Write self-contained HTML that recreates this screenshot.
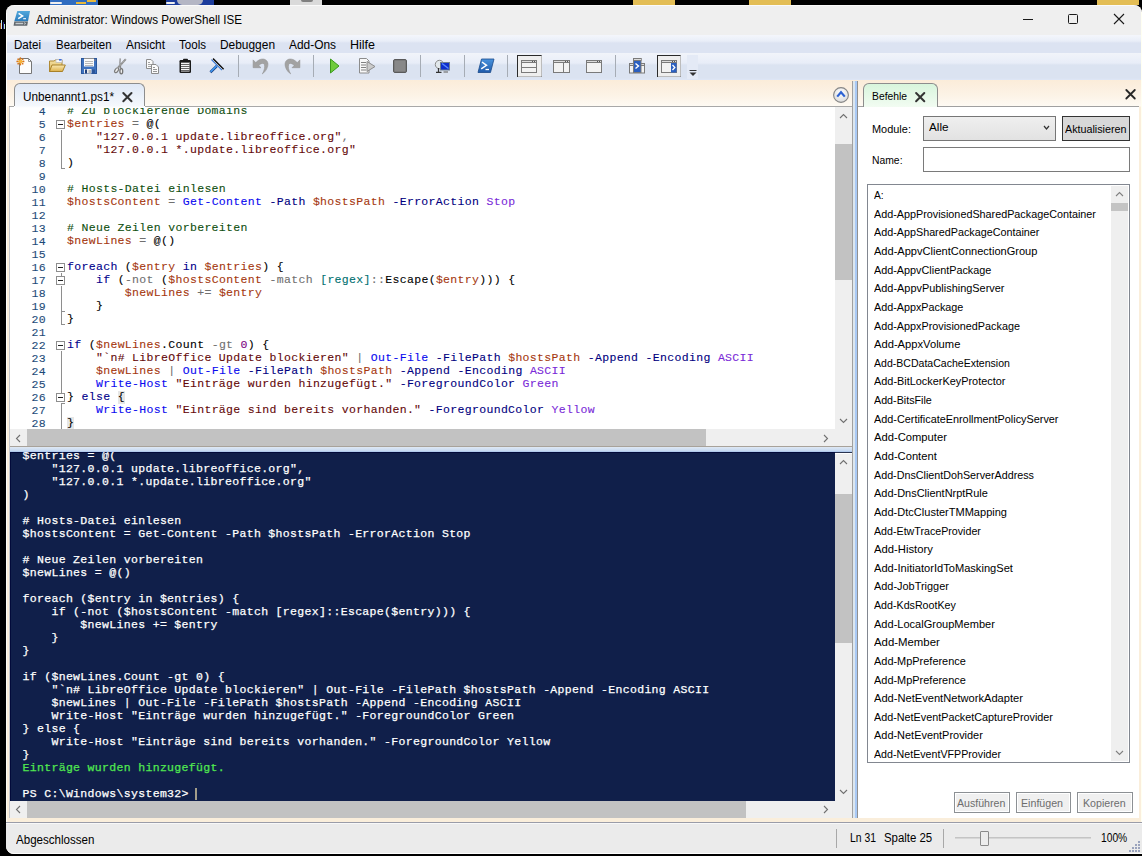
<!DOCTYPE html><html><head><meta charset="utf-8"><style>
html,body{margin:0;padding:0;background:#000;width:1142px;height:856px;overflow:hidden;position:relative;}
div{box-sizing:border-box;}
</style></head><body>
<div style="position:absolute;left:50px;top:0px;width:48px;height:5px;background:#2f6cc0;"></div>
<div style="position:absolute;left:50px;top:1.5px;width:12px;height:2.5px;background:#eeeeee;border-radius:1px;"></div>
<div style="position:absolute;left:76px;top:2px;width:10px;height:2px;background:#e8b83a;"></div>
<div style="position:absolute;left:87px;top:0px;width:9px;height:1.5px;background:#e8b83a;"></div>
<div style="position:absolute;left:166px;top:0px;width:48px;height:5px;background:#1c3c9c;"></div>
<div style="position:absolute;left:166px;top:1.5px;width:9px;height:2.5px;background:#eeeeee;border-radius:1px;"></div>
<div style="position:absolute;left:177px;top:0px;width:26px;height:5px;background:#b4b6c4;border-radius:0 0 13px 13px;"></div>
<div style="position:absolute;left:290px;top:0px;width:32px;height:5px;background:#dadada;"></div>
<div style="position:absolute;left:301px;top:0px;width:12px;height:1.5px;background:#808080;border-radius:0 0 6px 6px;"></div>
<div style="position:absolute;left:633px;top:0px;width:42px;height:5px;background:#e3bd55;"></div>
<div style="position:absolute;left:749px;top:0px;width:42px;height:5px;background:#e3bd55;"></div>
<div style="position:absolute;left:1097px;top:0px;width:42px;height:5px;background:#e3bd55;"></div>
<div style="position:absolute;left:1px;top:20px;width:1px;height:9px;background:#c8e8f0;"></div>
<div style="position:absolute;left:0px;top:23px;width:1px;height:6px;background:#a04a10;"></div>
<div style="position:absolute;left:3px;top:22px;width:1px;height:7px;background:#20208a;"></div>
<div style="position:absolute;left:4px;top:24px;width:1px;height:5px;background:#c0e8c0;"></div>
<div style="position:absolute;left:6px;top:5px;width:1136px;height:849px;background:#fdf6ec;border-radius:8px 8px 0 8px;overflow:hidden;"></div>
<div style="position:absolute;left:6px;top:5px;width:1136px;height:30px;background:#efefef;border-radius:8px 8px 0 0;"></div>
<div style="position:absolute;left:14px;top:5px;width:1120px;height:1px;background:#fafafa;"></div>
<div style="position:absolute;left:35.7px;top:7.84px;font-family:'Liberation Sans', sans-serif;font-size:12px;line-height:24px;color:#000;white-space:pre;transform:scaleX(0.9684);transform-origin:0 0;">Administrator: Windows PowerShell ISE</div>
<svg style="position:absolute;left:0px;top:0px;overflow:visible" width="40" height="30" viewBox="0 0 40 30">
<defs><linearGradient id="psg" x1="0" y1="0" x2="0" y2="1"><stop offset="0" stop-color="#52a8dc"/><stop offset="1" stop-color="#2a7cbd"/></linearGradient></defs>
<path d="M17.3 11 H30 L28 21.2 H14.3 Z" fill="url(#psg)"/>
<path d="M18.6 13.3 L22.6 15.9 L18.2 18.6" stroke="#fff" stroke-width="1.5" fill="none" stroke-linejoin="miter"/>
<path d="M23.2 18.7 H26" stroke="#fff" stroke-width="1.1"/>
<path d="M14.3 21.4 H28 L27.2 25.8 H13.6 Z" fill="#5f666b"/>
<path d="M15.6 22.8 H23.2 V24.3 H15.4 Z" fill="#c5cbcf"/>
<path d="M24 22.6 L25.8 23.5 L24 24.4" stroke="#c5cbcf" stroke-width="0.9" fill="none"/>
</svg>
<div style="position:absolute;left:1023px;top:19px;width:10px;height:1px;background:#1a1a1a;"></div>
<div style="position:absolute;left:1068px;top:14px;width:10px;height:10px;border:1px solid #1a1a1a;border-radius:1.5px;"></div>
<svg style="position:absolute;left:1113px;top:13px;overflow:visible" width="12" height="12" viewBox="0 0 12 12"><path d="M1 1 L11 11 M11 1 L1 11" stroke="#1a1a1a" stroke-width="1.1"/></svg>
<div style="position:absolute;left:6px;top:35px;width:1136px;height:18px;background:linear-gradient(#f4f6fb 0px,#e9eef8 6px,#dce3f2 8px,#dce3f2 18px);"></div>
<div style="position:absolute;left:14px;top:32.84px;font-family:'Liberation Sans', sans-serif;font-size:12px;line-height:24px;color:#000;white-space:pre;transform:scaleX(0.9637);transform-origin:0 0;">Datei</div>
<div style="position:absolute;left:55.7px;top:32.84px;font-family:'Liberation Sans', sans-serif;font-size:12px;line-height:24px;color:#000;white-space:pre;transform:scaleX(0.9564);transform-origin:0 0;">Bearbeiten</div>
<div style="position:absolute;left:125.7px;top:32.84px;font-family:'Liberation Sans', sans-serif;font-size:12px;line-height:24px;color:#000;white-space:pre;transform:scaleX(0.9913);transform-origin:0 0;">Ansicht</div>
<div style="position:absolute;left:178.6px;top:32.84px;font-family:'Liberation Sans', sans-serif;font-size:12px;line-height:24px;color:#000;white-space:pre;transform:scaleX(0.9637);transform-origin:0 0;">Tools</div>
<div style="position:absolute;left:220px;top:32.84px;font-family:'Liberation Sans', sans-serif;font-size:12px;line-height:24px;color:#000;white-space:pre;transform:scaleX(0.9932);transform-origin:0 0;">Debuggen</div>
<div style="position:absolute;left:289px;top:32.84px;font-family:'Liberation Sans', sans-serif;font-size:12px;line-height:24px;color:#000;white-space:pre;transform:scaleX(0.9927);transform-origin:0 0;">Add-Ons</div>
<div style="position:absolute;left:350px;top:32.84px;font-family:'Liberation Sans', sans-serif;font-size:12px;line-height:24px;color:#000;white-space:pre;transform:scaleX(1.041);transform-origin:0 0;">Hilfe</div>
<div style="position:absolute;left:6px;top:53px;width:1136px;height:27px;background:linear-gradient(#f1f4fa 0px,#e8edf8 10px,#dbe3f1 12px,#dbe3f1 25px,#dfe7f6 27px);"></div>
<svg style="position:absolute;left:0;top:0" width="720" height="80" viewBox="0 0 720 80"><rect x="238" y="55" width="1" height="22" fill="#a6acb5"/><rect x="313" y="55" width="1" height="22" fill="#a6acb5"/><rect x="420" y="55" width="1" height="22" fill="#a6acb5"/><rect x="464" y="55" width="1" height="22" fill="#a6acb5"/><rect x="507" y="55" width="1" height="22" fill="#a6acb5"/><rect x="615" y="55" width="1" height="22" fill="#a6acb5"/><path d="M19.5 58.5 H28.5 L31.5 61.5 V73.5 H19.5 Z" fill="#fdfdfd" stroke="#767676" stroke-width="1"/>
<path d="M28.5 58.5 V61.5 H31.5" fill="none" stroke="#8a8a8a" stroke-width="0.9"/>
<path d="M20.4 61.4 L23.40 61.40" stroke="#f2a42a" stroke-width="1.1"/><path d="M20.4 61.4 L22.52 63.52" stroke="#f2a42a" stroke-width="1.1"/><path d="M20.4 61.4 L20.40 64.40" stroke="#f2a42a" stroke-width="1.1"/><path d="M20.4 61.4 L18.28 63.52" stroke="#f2a42a" stroke-width="1.1"/><path d="M20.4 61.4 L17.40 61.40" stroke="#f2a42a" stroke-width="1.1"/><path d="M20.4 61.4 L18.28 59.28" stroke="#f2a42a" stroke-width="1.1"/><path d="M20.4 61.4 L20.40 58.40" stroke="#f2a42a" stroke-width="1.1"/><path d="M20.4 61.4 L22.52 59.28" stroke="#f2a42a" stroke-width="1.1"/><circle cx="23.60" cy="61.40" r="0.85" fill="#d8741a"/><circle cx="22.66" cy="63.66" r="0.85" fill="#d8741a"/><circle cx="20.40" cy="64.60" r="0.85" fill="#d8741a"/><circle cx="18.14" cy="63.66" r="0.85" fill="#d8741a"/><circle cx="17.20" cy="61.40" r="0.85" fill="#d8741a"/><circle cx="18.14" cy="59.14" r="0.85" fill="#d8741a"/><circle cx="20.40" cy="58.20" r="0.85" fill="#d8741a"/><circle cx="22.66" cy="59.14" r="0.85" fill="#d8741a"/>
<circle cx="20.4" cy="61.4" r="1.6" fill="#f7b43a"/><defs><linearGradient id="fg1" x1="0" y1="0" x2="0" y2="1"><stop offset="0" stop-color="#f6e3a6"/><stop offset="1" stop-color="#d9b254"/></linearGradient>
<linearGradient id="fg2" x1="0" y1="0" x2="0" y2="1"><stop offset="0" stop-color="#fbeab5"/><stop offset="1" stop-color="#dcb04a"/></linearGradient></defs>
<path d="M49.5 61 H54 L55.5 60 H62 V71.5 H49.5 Z" fill="url(#fg1)" stroke="#b08a35" stroke-width="1"/>
<rect x="56" y="59.5" width="6" height="3" fill="#f8f8f8" stroke="#b0b0b0" stroke-width="0.6"/>
<rect x="59" y="59" width="2.5" height="1.6" fill="#3d6fe0"/>
<path d="M49.5 71.5 L52 65 H65.3 L62.5 71.5 Z" fill="url(#fg2)" stroke="#a88128" stroke-width="1"/><rect x="81.5" y="58.5" width="15" height="15" fill="#3e72bf" stroke="#2a579c" stroke-width="1"/>
<rect x="84" y="58" width="10" height="8.5" fill="#fafafa"/>
<path d="M84 58.5 H94" stroke="#909090" stroke-width="1"/>
<path d="M85 61.5 H93 M85 63.5 H93 M85 65.5 H93" stroke="#a8a8a8" stroke-width="0.8"/>
<rect x="84" y="69" width="7.5" height="4.5" fill="#ececec"/>
<rect x="85" y="69.5" width="2" height="4" fill="#1f3f7a"/>
<rect x="88.5" y="70" width="2.5" height="3.5" fill="#b8b8b8"/>
<rect x="92" y="69.5" width="3" height="4" fill="#2c5598"/>
<rect x="94.5" y="59.5" width="1" height="1" fill="#d08040"/><path d="M120.2 58.3 Q119.3 63 120.8 68.5" stroke="#858585" stroke-width="1.2" fill="none"/>
<path d="M125.8 59.2 L118.2 67.5" stroke="#8a8a8a" stroke-width="1.9"/>
<path d="M125.5 59.6 L118.5 67.2" stroke="#f4f4f4" stroke-width="0.6" stroke-dasharray="0.9 1.1"/>
<ellipse cx="116.6" cy="70.2" rx="1.5" ry="2.7" transform="rotate(35 116.6 70.2)" fill="#f0f0f0" stroke="#7c7c7c" stroke-width="1.2"/>
<ellipse cx="121.3" cy="71.2" rx="1.4" ry="2.6" fill="#f0f0f0" stroke="#747474" stroke-width="1.3"/><path d="M146.5 59.5 H151 L153 61.5 V68.5 H146.5 Z" fill="#fbfbfb" stroke="#8c8c8c"/>
<path d="M148 62.5 H150 M148 64.5 H152 M148 66.5 H152" stroke="#9a9a9a" stroke-width="0.9"/>
<path d="M151.5 64.5 H156 L158.5 67 V73.5 H151.5 Z" fill="#fbfbfb" stroke="#8c8c8c"/>
<path d="M153 67.5 H155 M153 69.5 H157 M153 71.5 H157" stroke="#8a8a8a" stroke-width="0.9"/><rect x="179.5" y="60" width="11.5" height="13" rx="1.2" fill="#1a1a1a"/>
<rect x="183" y="58.8" width="5" height="2.5" rx="0.8" fill="#1a1a1a"/>
<rect x="181" y="62" width="8.5" height="9.5" fill="#f6f6f6"/>
<path d="M181 62.5 H189.5 M181 64.5 H189.5 M181 66.5 H189.5 M181 68.5 H189.5 M181 70.5 H189.5" stroke="#2a2a2a" stroke-width="0.7"/><path d="M211.5 59.5 L222 70" stroke="#3a7ad8" stroke-width="1.2"/>
<path d="M212.2 59.2 L222.6 69.6" stroke="#ffffff" stroke-width="0.9"/>
<path d="M213 58.6 L223.6 69.2" stroke="#111" stroke-width="1.5"/>
<path d="M216.8 66 L210.4 72.2" stroke="#1a3a78" stroke-width="2.6"/>
<path d="M216.6 65.9 L210.5 71.9" stroke="#3d96f0" stroke-width="1.6"/><path d="M253.1 59.9 L253.1 67.7 L261 67.7 L258.8 65.5 C260.5 63.6 263.2 62.6 264.2 64.2 C265.2 66.3 264.5 70.5 262.3 73.9 C266.3 71.2 268.3 66.8 267.9 63.2 C267.3 58.7 260.8 56.8 255.8 62.6 Z" fill="#a2a2a2" stroke="#8e8e8e" stroke-width="0.5"/><g transform="translate(553,0) scale(-1,1)"><path d="M253.1 59.9 L253.1 67.7 L261 67.7 L258.8 65.5 C260.5 63.6 263.2 62.6 264.2 64.2 C265.2 66.3 264.5 70.5 262.3 73.9 C266.3 71.2 268.3 66.8 267.9 63.2 C267.3 58.7 260.8 56.8 255.8 62.6 Z" fill="#a2a2a2" stroke="#8e8e8e" stroke-width="0.5"/></g><path d="M330.5 59 L339 66 L330.5 73 Z" fill="#6fcb3c" stroke="#3b9b1c" stroke-width="1"/><path d="M359.5 58.5 H366.5 L369 61 V73 H359.5 Z" fill="#f8f8f8" stroke="#8c8c8c"/>
<path d="M361 62.5 H366 M361 65 H366 M361 67.5 H366 M361 70 H366" stroke="#808080" stroke-width="1"/>
<path d="M367 61.5 L375 66.5 L367 71.5 Z" fill="#cacaca" stroke="#8c8c8c"/><rect x="393.5" y="59.5" width="13" height="13" rx="1.5" fill="#7b7b7b" stroke="#5a5a5a"/>
<rect x="395" y="61" width="10" height="10" fill="#888"/><circle cx="439.5" cy="64.5" r="4.2" fill="#e2e8ec" stroke="#8a8a8a"/>
<path d="M438.5 68 V72 M436 72.3 H441.5" stroke="#333" stroke-width="1.2"/>
<rect x="440.5" y="62.5" width="9" height="7.5" fill="#0d2ecc" stroke="#708090"/>
<path d="M442 63.5 L448.5 68.5" stroke="#5a8cff" stroke-width="1.3"/>
<path d="M443.5 72 H448" stroke="#7a7a7a" stroke-width="1.3"/><defs><linearGradient id="psg2" x1="0" y1="0" x2="0" y2="1"><stop offset="0" stop-color="#4a94de"/><stop offset="1" stop-color="#1f5aaa"/></linearGradient></defs>
<path d="M481.5 59 H494 L490.5 72.5 H478 Z" fill="url(#psg2)" stroke="#1a4a8a" stroke-width="0.8"/>
<path d="M482 62 L486.5 65.3 L481.2 68.8" stroke="#fff" stroke-width="1.5" fill="none"/>
<path d="M485.5 69.5 H489" stroke="#fff" stroke-width="1.3"/><rect x="517.5" y="55.5" width="24" height="21" fill="#eeeeee" stroke="#2a2a2a"/><path d="M518 76.5 H541.5 V55.5" stroke="#bcbcbc" fill="none"/><rect x="521.5" y="60.5" width="15" height="12" fill="#f2f2f2" stroke="#7a7a7a"/><rect x="521.5" y="60.5" width="15" height="2" fill="#dcdcdc" stroke="#7a7a7a"/><rect x="532" y="61" width="1" height="1" fill="#555"/><rect x="534" y="61" width="1" height="1" fill="#555"/><path d="M521 67.5 H537" stroke="#7a7a7a"/><rect x="553.5" y="60.5" width="16" height="12" fill="#f2f2f2" stroke="#7a7a7a"/><rect x="553.5" y="60.5" width="16" height="2" fill="#dcdcdc" stroke="#7a7a7a"/><rect x="565" y="61" width="1" height="1" fill="#555"/><rect x="567" y="61" width="1" height="1" fill="#555"/><path d="M563.5 62 V73" stroke="#7a7a7a"/><rect x="586.5" y="60.5" width="15" height="12" fill="#f2f2f2" stroke="#7a7a7a"/><rect x="586.5" y="60.5" width="15" height="2" fill="#dcdcdc" stroke="#7a7a7a"/><rect x="597" y="61" width="1" height="1" fill="#555"/><rect x="599" y="61" width="1" height="1" fill="#555"/><rect x="629.5" y="63.5" width="15" height="9.5" fill="#f2f2f2" stroke="#7a7a7a"/>
<rect x="629.5" y="63.5" width="15" height="2" fill="#dcdcdc" stroke="#7a7a7a"/>
<rect x="633.5" y="58.5" width="7.5" height="14" fill="#2a5fc0" stroke="#7a7a7a"/>
<rect x="633.5" y="58.5" width="7.5" height="2" fill="#dcdcdc" stroke="#7a7a7a"/>
<path d="M635.5 63.5 L638.5 66 L635.5 68.5" stroke="#fff" stroke-width="1.4" fill="none"/><rect x="657.5" y="55.5" width="23" height="21" fill="#eeeeee" stroke="#2a2a2a"/><path d="M658 76.5 H680.5 V55.5" stroke="#bcbcbc" fill="none"/><rect x="661.5" y="60.5" width="15" height="12" fill="#f2f2f2" stroke="#7a7a7a"/><rect x="661.5" y="60.5" width="15" height="2" fill="#dcdcdc" stroke="#7a7a7a"/><rect x="672" y="61" width="1" height="1" fill="#555"/><rect x="674" y="61" width="1" height="1" fill="#555"/><rect x="671" y="63" width="5.5" height="9.5" fill="#2a5fc0"/>
<path d="M672.5 65 L674.8 67.5 L672.5 70" stroke="#fff" stroke-width="1.3" fill="none"/><rect x="687" y="55" width="11" height="24" fill="#e4eaf6"/><path d="M689.5 70.5 H696.5" stroke="#333"/><path d="M689.5 72.5 H696.5 L693 76 Z" fill="#333"/></svg>
<div style="position:absolute;left:6px;top:80px;width:1136px;height:743px;background:linear-gradient(#fbecd9 0px,#fcf3e7 16px,#fefaf3 26px,#faeedb 27px,#faeedb 743px);"></div>
<div style="position:absolute;left:9px;top:106px;width:1px;height:712px;background:#c6c8cc;"></div>
<div style="position:absolute;left:6px;top:822px;width:1136px;height:32px;background:#ebebeb;border-top:1px solid #9a9ca8;border-bottom:1px solid #fdfdfd;border-radius:0 0 0 8px;"></div>
<div style="position:absolute;left:6px;top:823px;width:1136px;height:1px;background:#f8f8f8;"></div>
<div style="position:absolute;left:16.1px;top:827.84px;font-family:'Liberation Sans', sans-serif;font-size:12px;line-height:24px;color:#000;white-space:pre;transform:scaleX(0.9634);transform-origin:0 0;">Abgeschlossen</div>
<div style="position:absolute;left:14px;top:83px;width:131px;height:24px;background:linear-gradient(#dfe8f6,#f6f9fd);border:1px solid #8d8d8d;border-bottom:none;border-radius:6px 6px 0 0;"></div>
<div style="position:absolute;left:22.8px;top:85.14px;font-family:'Liberation Sans', sans-serif;font-size:12px;line-height:24px;color:#000;white-space:pre;transform:scaleX(0.9815);transform-origin:0 0;">Unbenannt1.ps1*</div>
<svg style="position:absolute;left:122px;top:92px;overflow:visible" width="10" height="10" viewBox="0 0 10 10"><path d="M1.3 1 L9.5 9.2 M9.5 1 L1.3 9.2" stroke="#333" stroke-width="2" stroke-linecap="round"/></svg>
<svg style="position:absolute;left:832px;top:86px;overflow:visible" width="18" height="18" viewBox="0 0 18 18">
<defs><radialGradient id="cg" cx="0.5" cy="0.35" r="0.7"><stop offset="0" stop-color="#ffffff"/><stop offset="1" stop-color="#d8d8d8"/></radialGradient></defs>
<circle cx="9" cy="9" r="7.4" fill="url(#cg)" stroke="#858585" stroke-width="1.1"/>
<path d="M5.2 10.6 L9 6.2 L12.8 10.6" stroke="#2d62d3" stroke-width="2.2" fill="none"/>
</svg>
<div style="position:absolute;left:10px;top:106px;width:842px;height:324px;background:#fff;"></div>
<div style="position:absolute;left:9px;top:106px;width:5px;height:1px;background:#a8a8a8;"></div>
<div style="position:absolute;left:145px;top:106px;width:707px;height:1px;background:#a8a8a8;"></div>
<div style="position:absolute;left:15px;top:106px;width:129px;height:2px;background:linear-gradient(#f6f9fd,#fff);"></div>
<div style="position:absolute;left:117.5px;top:391px;width:7.2px;height:13px;background:#e6e6e6;"></div>
<div style="position:absolute;left:67px;top:417px;width:7.2px;height:13px;background:#e6e6e6;"></div>
<div style="position:absolute;left:9px;top:108px;width:826px;height:321px;overflow:hidden;">
<div style="position:absolute;left:37px;top:-8.16px;font-family:'Liberation Mono', monospace;font-size:11.5px;line-height:23px;color:#1d4a78;white-space:pre;transform:translateX(-100%);letter-spacing:0.33px;-webkit-text-stroke:0.1px #1d4a78;">4</div>
<div style="position:absolute;left:58.0px;top:-9.36px;font-family:'Liberation Mono', monospace;font-size:11.5px;line-height:23px;color:#000;white-space:pre;letter-spacing:0.33px;-webkit-text-stroke:0.1px;"><span style="color:#0f4f0f"># Zu blockierende Domains</span></div>
<div style="position:absolute;left:37px;top:4.84px;font-family:'Liberation Mono', monospace;font-size:11.5px;line-height:23px;color:#1d4a78;white-space:pre;transform:translateX(-100%);letter-spacing:0.33px;-webkit-text-stroke:0.1px #1d4a78;">5</div>
<div style="position:absolute;left:58.0px;top:3.64px;font-family:'Liberation Mono', monospace;font-size:11.5px;line-height:23px;color:#000;white-space:pre;letter-spacing:0.33px;-webkit-text-stroke:0.1px;"><span style="color:#a5380f">$entries</span> <span style="color:#707070">=</span> <span style="color:#000000">@(</span></div>
<div style="position:absolute;left:37px;top:17.84px;font-family:'Liberation Mono', monospace;font-size:11.5px;line-height:23px;color:#1d4a78;white-space:pre;transform:translateX(-100%);letter-spacing:0.33px;-webkit-text-stroke:0.1px #1d4a78;">6</div>
<div style="position:absolute;left:58.0px;top:16.64px;font-family:'Liberation Mono', monospace;font-size:11.5px;line-height:23px;color:#000;white-space:pre;letter-spacing:0.33px;-webkit-text-stroke:0.1px;">    <span style="color:#640808">&quot;127.0.0.1 update.libreoffice.org&quot;</span><span style="color:#707070">,</span></div>
<div style="position:absolute;left:37px;top:30.84px;font-family:'Liberation Mono', monospace;font-size:11.5px;line-height:23px;color:#1d4a78;white-space:pre;transform:translateX(-100%);letter-spacing:0.33px;-webkit-text-stroke:0.1px #1d4a78;">7</div>
<div style="position:absolute;left:58.0px;top:29.64px;font-family:'Liberation Mono', monospace;font-size:11.5px;line-height:23px;color:#000;white-space:pre;letter-spacing:0.33px;-webkit-text-stroke:0.1px;">    <span style="color:#640808">&quot;127.0.0.1 *.update.libreoffice.org&quot;</span></div>
<div style="position:absolute;left:37px;top:43.84px;font-family:'Liberation Mono', monospace;font-size:11.5px;line-height:23px;color:#1d4a78;white-space:pre;transform:translateX(-100%);letter-spacing:0.33px;-webkit-text-stroke:0.1px #1d4a78;">8</div>
<div style="position:absolute;left:58.0px;top:42.64px;font-family:'Liberation Mono', monospace;font-size:11.5px;line-height:23px;color:#000;white-space:pre;letter-spacing:0.33px;-webkit-text-stroke:0.1px;"><span style="color:#000000">)</span></div>
<div style="position:absolute;left:37px;top:56.84px;font-family:'Liberation Mono', monospace;font-size:11.5px;line-height:23px;color:#1d4a78;white-space:pre;transform:translateX(-100%);letter-spacing:0.33px;-webkit-text-stroke:0.1px #1d4a78;">9</div>
<div style="position:absolute;left:37px;top:69.84px;font-family:'Liberation Mono', monospace;font-size:11.5px;line-height:23px;color:#1d4a78;white-space:pre;transform:translateX(-100%);letter-spacing:0.33px;-webkit-text-stroke:0.1px #1d4a78;">10</div>
<div style="position:absolute;left:58.0px;top:68.64px;font-family:'Liberation Mono', monospace;font-size:11.5px;line-height:23px;color:#000;white-space:pre;letter-spacing:0.33px;-webkit-text-stroke:0.1px;"><span style="color:#0f4f0f"># Hosts-Datei einlesen</span></div>
<div style="position:absolute;left:37px;top:82.84px;font-family:'Liberation Mono', monospace;font-size:11.5px;line-height:23px;color:#1d4a78;white-space:pre;transform:translateX(-100%);letter-spacing:0.33px;-webkit-text-stroke:0.1px #1d4a78;">11</div>
<div style="position:absolute;left:58.0px;top:81.64px;font-family:'Liberation Mono', monospace;font-size:11.5px;line-height:23px;color:#000;white-space:pre;letter-spacing:0.33px;-webkit-text-stroke:0.1px;"><span style="color:#a5380f">$hostsContent</span> <span style="color:#707070">=</span> <span style="color:#0a0af0">Get-Content</span> <span style="color:#000080">-Path</span> <span style="color:#a5380f">$hostsPath</span> <span style="color:#000080">-ErrorAction</span> <span style="color:#7a2ad8">Stop</span></div>
<div style="position:absolute;left:37px;top:95.84px;font-family:'Liberation Mono', monospace;font-size:11.5px;line-height:23px;color:#1d4a78;white-space:pre;transform:translateX(-100%);letter-spacing:0.33px;-webkit-text-stroke:0.1px #1d4a78;">12</div>
<div style="position:absolute;left:37px;top:108.84px;font-family:'Liberation Mono', monospace;font-size:11.5px;line-height:23px;color:#1d4a78;white-space:pre;transform:translateX(-100%);letter-spacing:0.33px;-webkit-text-stroke:0.1px #1d4a78;">13</div>
<div style="position:absolute;left:58.0px;top:107.64px;font-family:'Liberation Mono', monospace;font-size:11.5px;line-height:23px;color:#000;white-space:pre;letter-spacing:0.33px;-webkit-text-stroke:0.1px;"><span style="color:#0f4f0f"># Neue Zeilen vorbereiten</span></div>
<div style="position:absolute;left:37px;top:121.84px;font-family:'Liberation Mono', monospace;font-size:11.5px;line-height:23px;color:#1d4a78;white-space:pre;transform:translateX(-100%);letter-spacing:0.33px;-webkit-text-stroke:0.1px #1d4a78;">14</div>
<div style="position:absolute;left:58.0px;top:120.64px;font-family:'Liberation Mono', monospace;font-size:11.5px;line-height:23px;color:#000;white-space:pre;letter-spacing:0.33px;-webkit-text-stroke:0.1px;"><span style="color:#a5380f">$newLines</span> <span style="color:#707070">=</span> <span style="color:#000000">@(</span><span style="color:#000000">)</span></div>
<div style="position:absolute;left:37px;top:134.84px;font-family:'Liberation Mono', monospace;font-size:11.5px;line-height:23px;color:#1d4a78;white-space:pre;transform:translateX(-100%);letter-spacing:0.33px;-webkit-text-stroke:0.1px #1d4a78;">15</div>
<div style="position:absolute;left:37px;top:147.84px;font-family:'Liberation Mono', monospace;font-size:11.5px;line-height:23px;color:#1d4a78;white-space:pre;transform:translateX(-100%);letter-spacing:0.33px;-webkit-text-stroke:0.1px #1d4a78;">16</div>
<div style="position:absolute;left:58.0px;top:146.64px;font-family:'Liberation Mono', monospace;font-size:11.5px;line-height:23px;color:#000;white-space:pre;letter-spacing:0.33px;-webkit-text-stroke:0.1px;"><span style="color:#00008b">foreach</span> <span style="color:#000000">(</span><span style="color:#a5380f">$entry</span> <span style="color:#00008b">in</span> <span style="color:#a5380f">$entries</span><span style="color:#000000">)</span> <span style="color:#000000">{</span></div>
<div style="position:absolute;left:37px;top:160.84px;font-family:'Liberation Mono', monospace;font-size:11.5px;line-height:23px;color:#1d4a78;white-space:pre;transform:translateX(-100%);letter-spacing:0.33px;-webkit-text-stroke:0.1px #1d4a78;">17</div>
<div style="position:absolute;left:58.0px;top:159.64px;font-family:'Liberation Mono', monospace;font-size:11.5px;line-height:23px;color:#000;white-space:pre;letter-spacing:0.33px;-webkit-text-stroke:0.1px;">    <span style="color:#00008b">if</span> <span style="color:#000000">(</span><span style="color:#707070">-not</span> <span style="color:#000000">(</span><span style="color:#a5380f">$hostsContent</span> <span style="color:#707070">-match</span> <span style="color:#007070">[regex]</span><span style="color:#707070">::</span><span style="color:#000000">Escape</span><span style="color:#000000">(</span><span style="color:#a5380f">$entry</span><span style="color:#000000">)</span><span style="color:#000000">)</span><span style="color:#000000">)</span> <span style="color:#000000">{</span></div>
<div style="position:absolute;left:37px;top:173.84px;font-family:'Liberation Mono', monospace;font-size:11.5px;line-height:23px;color:#1d4a78;white-space:pre;transform:translateX(-100%);letter-spacing:0.33px;-webkit-text-stroke:0.1px #1d4a78;">18</div>
<div style="position:absolute;left:58.0px;top:172.64px;font-family:'Liberation Mono', monospace;font-size:11.5px;line-height:23px;color:#000;white-space:pre;letter-spacing:0.33px;-webkit-text-stroke:0.1px;">        <span style="color:#a5380f">$newLines</span> <span style="color:#707070">+=</span> <span style="color:#a5380f">$entry</span></div>
<div style="position:absolute;left:37px;top:186.84px;font-family:'Liberation Mono', monospace;font-size:11.5px;line-height:23px;color:#1d4a78;white-space:pre;transform:translateX(-100%);letter-spacing:0.33px;-webkit-text-stroke:0.1px #1d4a78;">19</div>
<div style="position:absolute;left:58.0px;top:185.64px;font-family:'Liberation Mono', monospace;font-size:11.5px;line-height:23px;color:#000;white-space:pre;letter-spacing:0.33px;-webkit-text-stroke:0.1px;">    <span style="color:#000000">}</span></div>
<div style="position:absolute;left:37px;top:199.84px;font-family:'Liberation Mono', monospace;font-size:11.5px;line-height:23px;color:#1d4a78;white-space:pre;transform:translateX(-100%);letter-spacing:0.33px;-webkit-text-stroke:0.1px #1d4a78;">20</div>
<div style="position:absolute;left:58.0px;top:198.64px;font-family:'Liberation Mono', monospace;font-size:11.5px;line-height:23px;color:#000;white-space:pre;letter-spacing:0.33px;-webkit-text-stroke:0.1px;"><span style="color:#000000">}</span></div>
<div style="position:absolute;left:37px;top:212.84px;font-family:'Liberation Mono', monospace;font-size:11.5px;line-height:23px;color:#1d4a78;white-space:pre;transform:translateX(-100%);letter-spacing:0.33px;-webkit-text-stroke:0.1px #1d4a78;">21</div>
<div style="position:absolute;left:37px;top:225.84px;font-family:'Liberation Mono', monospace;font-size:11.5px;line-height:23px;color:#1d4a78;white-space:pre;transform:translateX(-100%);letter-spacing:0.33px;-webkit-text-stroke:0.1px #1d4a78;">22</div>
<div style="position:absolute;left:58.0px;top:224.64px;font-family:'Liberation Mono', monospace;font-size:11.5px;line-height:23px;color:#000;white-space:pre;letter-spacing:0.33px;-webkit-text-stroke:0.1px;"><span style="color:#00008b">if</span> <span style="color:#000000">(</span><span style="color:#a5380f">$newLines</span><span style="color:#000000">.Count</span> <span style="color:#707070">-gt</span> <span style="color:#800080">0</span><span style="color:#000000">)</span> <span style="color:#000000">{</span></div>
<div style="position:absolute;left:37px;top:238.84px;font-family:'Liberation Mono', monospace;font-size:11.5px;line-height:23px;color:#1d4a78;white-space:pre;transform:translateX(-100%);letter-spacing:0.33px;-webkit-text-stroke:0.1px #1d4a78;">23</div>
<div style="position:absolute;left:58.0px;top:237.64px;font-family:'Liberation Mono', monospace;font-size:11.5px;line-height:23px;color:#000;white-space:pre;letter-spacing:0.33px;-webkit-text-stroke:0.1px;">    <span style="color:#640808">&quot;`n# LibreOffice Update blockieren&quot;</span> <span style="color:#707070">|</span> <span style="color:#0a0af0">Out-File</span> <span style="color:#000080">-FilePath</span> <span style="color:#a5380f">$hostsPath</span> <span style="color:#000080">-Append</span> <span style="color:#000080">-Encoding</span> <span style="color:#7a2ad8">ASCII</span></div>
<div style="position:absolute;left:37px;top:251.84px;font-family:'Liberation Mono', monospace;font-size:11.5px;line-height:23px;color:#1d4a78;white-space:pre;transform:translateX(-100%);letter-spacing:0.33px;-webkit-text-stroke:0.1px #1d4a78;">24</div>
<div style="position:absolute;left:58.0px;top:250.64px;font-family:'Liberation Mono', monospace;font-size:11.5px;line-height:23px;color:#000;white-space:pre;letter-spacing:0.33px;-webkit-text-stroke:0.1px;">    <span style="color:#a5380f">$newLines</span> <span style="color:#707070">|</span> <span style="color:#0a0af0">Out-File</span> <span style="color:#000080">-FilePath</span> <span style="color:#a5380f">$hostsPath</span> <span style="color:#000080">-Append</span> <span style="color:#000080">-Encoding</span> <span style="color:#7a2ad8">ASCII</span></div>
<div style="position:absolute;left:37px;top:264.84px;font-family:'Liberation Mono', monospace;font-size:11.5px;line-height:23px;color:#1d4a78;white-space:pre;transform:translateX(-100%);letter-spacing:0.33px;-webkit-text-stroke:0.1px #1d4a78;">25</div>
<div style="position:absolute;left:58.0px;top:263.64px;font-family:'Liberation Mono', monospace;font-size:11.5px;line-height:23px;color:#000;white-space:pre;letter-spacing:0.33px;-webkit-text-stroke:0.1px;">    <span style="color:#0a0af0">Write-Host</span> <span style="color:#640808">&quot;Einträge wurden hinzugefügt.&quot;</span> <span style="color:#000080">-ForegroundColor</span> <span style="color:#7a2ad8">Green</span></div>
<div style="position:absolute;left:37px;top:277.84px;font-family:'Liberation Mono', monospace;font-size:11.5px;line-height:23px;color:#1d4a78;white-space:pre;transform:translateX(-100%);letter-spacing:0.33px;-webkit-text-stroke:0.1px #1d4a78;">26</div>
<div style="position:absolute;left:58.0px;top:276.64px;font-family:'Liberation Mono', monospace;font-size:11.5px;line-height:23px;color:#000;white-space:pre;letter-spacing:0.33px;-webkit-text-stroke:0.1px;"><span style="color:#000000">}</span> <span style="color:#00008b">else</span> <span style="color:#000000">{</span></div>
<div style="position:absolute;left:37px;top:290.84px;font-family:'Liberation Mono', monospace;font-size:11.5px;line-height:23px;color:#1d4a78;white-space:pre;transform:translateX(-100%);letter-spacing:0.33px;-webkit-text-stroke:0.1px #1d4a78;">27</div>
<div style="position:absolute;left:58.0px;top:289.64px;font-family:'Liberation Mono', monospace;font-size:11.5px;line-height:23px;color:#000;white-space:pre;letter-spacing:0.33px;-webkit-text-stroke:0.1px;">    <span style="color:#0a0af0">Write-Host</span> <span style="color:#640808">&quot;Einträge sind bereits vorhanden.&quot;</span> <span style="color:#000080">-ForegroundColor</span> <span style="color:#7a2ad8">Yellow</span></div>
<div style="position:absolute;left:37px;top:303.84px;font-family:'Liberation Mono', monospace;font-size:11.5px;line-height:23px;color:#1d4a78;white-space:pre;transform:translateX(-100%);letter-spacing:0.33px;-webkit-text-stroke:0.1px #1d4a78;">28</div>
<div style="position:absolute;left:58.0px;top:302.64px;font-family:'Liberation Mono', monospace;font-size:11.5px;line-height:23px;color:#000;white-space:pre;letter-spacing:0.33px;-webkit-text-stroke:0.1px;"><span style="color:#000000">}</span></div>
</div>
<div style="position:absolute;left:56px;top:120px;width:9px;height:9px;border:1px solid #8e8e8e;background:#fff;"></div>
<div style="position:absolute;left:58px;top:124px;width:5px;height:1px;background:#222;"></div>
<div style="position:absolute;left:61px;top:130px;width:1px;height:39px;background:#8e8e8e;"></div>
<div style="position:absolute;left:61px;top:168px;width:4px;height:1px;background:#8e8e8e;"></div>
<div style="position:absolute;left:56px;top:263px;width:9px;height:9px;border:1px solid #8e8e8e;background:#fff;"></div>
<div style="position:absolute;left:58px;top:267px;width:5px;height:1px;background:#222;"></div>
<div style="position:absolute;left:61px;top:273px;width:1px;height:4px;background:#8e8e8e;"></div>
<div style="position:absolute;left:56px;top:276px;width:9px;height:9px;border:1px solid #8e8e8e;background:#fff;"></div>
<div style="position:absolute;left:58px;top:280px;width:5px;height:1px;background:#222;"></div>
<div style="position:absolute;left:61px;top:286px;width:1px;height:39px;background:#8e8e8e;"></div>
<div style="position:absolute;left:61px;top:311px;width:4px;height:1px;background:#8e8e8e;"></div>
<div style="position:absolute;left:61px;top:324px;width:4px;height:1px;background:#8e8e8e;"></div>
<div style="position:absolute;left:56px;top:341px;width:9px;height:9px;border:1px solid #8e8e8e;background:#fff;"></div>
<div style="position:absolute;left:58px;top:345px;width:5px;height:1px;background:#222;"></div>
<div style="position:absolute;left:61px;top:351px;width:1px;height:43px;background:#8e8e8e;"></div>
<div style="position:absolute;left:56px;top:393px;width:9px;height:9px;border:1px solid #8e8e8e;background:#fff;"></div>
<div style="position:absolute;left:58px;top:397px;width:5px;height:1px;background:#222;"></div>
<div style="position:absolute;left:61px;top:403px;width:1px;height:27px;background:#8e8e8e;"></div>
<div style="position:absolute;left:61px;top:403px;width:4px;height:1px;background:#8e8e8e;"></div>
<div style="position:absolute;left:835px;top:107px;width:17px;height:323px;background:#efefef;"></div>
<div style="position:absolute;left:835px;top:144px;width:17px;height:136px;background:#c2c2c2;"></div>
<svg style="position:absolute;left:839px;top:113px;overflow:visible" width="9" height="6" viewBox="0 0 9 6"><path d="M1 5 L4.5 1.5 L8 5" stroke="#707070" stroke-width="1.1" fill="none"/></svg>
<svg style="position:absolute;left:839px;top:418px;overflow:visible" width="9" height="6" viewBox="0 0 9 6"><path d="M1 1 L4.5 4.5 L8 1" stroke="#707070" stroke-width="1.1" fill="none"/></svg>
<div style="position:absolute;left:10px;top:429px;width:842px;height:18px;background:#efefef;"></div>
<div style="position:absolute;left:27px;top:429px;width:679px;height:18px;background:#c2c2c2;"></div>
<svg style="position:absolute;left:15px;top:434px;overflow:visible" width="6" height="9" viewBox="0 0 6 9"><path d="M5 1 L1.5 4.5 L5 8" stroke="#707070" stroke-width="1.1" fill="none"/></svg>
<svg style="position:absolute;left:823px;top:434px;overflow:visible" width="6" height="9" viewBox="0 0 6 9"><path d="M1 1 L4.5 4.5 L1 8" stroke="#707070" stroke-width="1.1" fill="none"/></svg>
<div style="position:absolute;left:10px;top:446px;width:842px;height:7px;background:linear-gradient(#a8a29a 0,#a8a29a 1px,#dfe8f3 1px,#c4d8f2 5px,#9fbde8 6px,#2a3450 6px);"></div>
<div style="position:absolute;left:10px;top:452px;width:825px;height:349px;background:#101f4a;border-left:1px solid #020a3a;border-top:1px solid #020a3a;"></div>
<div style="position:absolute;left:9px;top:452px;width:826px;height:349px;overflow:hidden;">
<div style="position:absolute;left:13.5px;top:-7.96px;font-family:'Liberation Mono', monospace;font-size:11.5px;line-height:23px;color:#ffffff;white-space:pre;letter-spacing:0.33px;-webkit-text-stroke:0.25px;">$entries = @(</div>
<div style="position:absolute;left:13.5px;top:5.04px;font-family:'Liberation Mono', monospace;font-size:11.5px;line-height:23px;color:#ffffff;white-space:pre;letter-spacing:0.33px;-webkit-text-stroke:0.25px;">    &quot;127.0.0.1 update.libreoffice.org&quot;,</div>
<div style="position:absolute;left:13.5px;top:18.04px;font-family:'Liberation Mono', monospace;font-size:11.5px;line-height:23px;color:#ffffff;white-space:pre;letter-spacing:0.33px;-webkit-text-stroke:0.25px;">    &quot;127.0.0.1 *.update.libreoffice.org&quot;</div>
<div style="position:absolute;left:13.5px;top:31.04px;font-family:'Liberation Mono', monospace;font-size:11.5px;line-height:23px;color:#ffffff;white-space:pre;letter-spacing:0.33px;-webkit-text-stroke:0.25px;">)</div>
<div style="position:absolute;left:13.5px;top:57.04px;font-family:'Liberation Mono', monospace;font-size:11.5px;line-height:23px;color:#ffffff;white-space:pre;letter-spacing:0.33px;-webkit-text-stroke:0.25px;"># Hosts-Datei einlesen</div>
<div style="position:absolute;left:13.5px;top:70.04px;font-family:'Liberation Mono', monospace;font-size:11.5px;line-height:23px;color:#ffffff;white-space:pre;letter-spacing:0.33px;-webkit-text-stroke:0.25px;">$hostsContent = Get-Content -Path $hostsPath -ErrorAction Stop</div>
<div style="position:absolute;left:13.5px;top:96.04px;font-family:'Liberation Mono', monospace;font-size:11.5px;line-height:23px;color:#ffffff;white-space:pre;letter-spacing:0.33px;-webkit-text-stroke:0.25px;"># Neue Zeilen vorbereiten</div>
<div style="position:absolute;left:13.5px;top:109.04px;font-family:'Liberation Mono', monospace;font-size:11.5px;line-height:23px;color:#ffffff;white-space:pre;letter-spacing:0.33px;-webkit-text-stroke:0.25px;">$newLines = @()</div>
<div style="position:absolute;left:13.5px;top:135.04px;font-family:'Liberation Mono', monospace;font-size:11.5px;line-height:23px;color:#ffffff;white-space:pre;letter-spacing:0.33px;-webkit-text-stroke:0.25px;">foreach ($entry in $entries) {</div>
<div style="position:absolute;left:13.5px;top:148.04px;font-family:'Liberation Mono', monospace;font-size:11.5px;line-height:23px;color:#ffffff;white-space:pre;letter-spacing:0.33px;-webkit-text-stroke:0.25px;">    if (-not ($hostsContent -match [regex]::Escape($entry))) {</div>
<div style="position:absolute;left:13.5px;top:161.04px;font-family:'Liberation Mono', monospace;font-size:11.5px;line-height:23px;color:#ffffff;white-space:pre;letter-spacing:0.33px;-webkit-text-stroke:0.25px;">        $newLines += $entry</div>
<div style="position:absolute;left:13.5px;top:174.04px;font-family:'Liberation Mono', monospace;font-size:11.5px;line-height:23px;color:#ffffff;white-space:pre;letter-spacing:0.33px;-webkit-text-stroke:0.25px;">    }</div>
<div style="position:absolute;left:13.5px;top:187.04px;font-family:'Liberation Mono', monospace;font-size:11.5px;line-height:23px;color:#ffffff;white-space:pre;letter-spacing:0.33px;-webkit-text-stroke:0.25px;">}</div>
<div style="position:absolute;left:13.5px;top:213.04px;font-family:'Liberation Mono', monospace;font-size:11.5px;line-height:23px;color:#ffffff;white-space:pre;letter-spacing:0.33px;-webkit-text-stroke:0.25px;">if ($newLines.Count -gt 0) {</div>
<div style="position:absolute;left:13.5px;top:226.04px;font-family:'Liberation Mono', monospace;font-size:11.5px;line-height:23px;color:#ffffff;white-space:pre;letter-spacing:0.33px;-webkit-text-stroke:0.25px;">    &quot;`n# LibreOffice Update blockieren&quot; | Out-File -FilePath $hostsPath -Append -Encoding ASCII</div>
<div style="position:absolute;left:13.5px;top:239.04px;font-family:'Liberation Mono', monospace;font-size:11.5px;line-height:23px;color:#ffffff;white-space:pre;letter-spacing:0.33px;-webkit-text-stroke:0.25px;">    $newLines | Out-File -FilePath $hostsPath -Append -Encoding ASCII</div>
<div style="position:absolute;left:13.5px;top:252.04px;font-family:'Liberation Mono', monospace;font-size:11.5px;line-height:23px;color:#ffffff;white-space:pre;letter-spacing:0.33px;-webkit-text-stroke:0.25px;">    Write-Host &quot;Einträge wurden hinzugefügt.&quot; -ForegroundColor Green</div>
<div style="position:absolute;left:13.5px;top:265.04px;font-family:'Liberation Mono', monospace;font-size:11.5px;line-height:23px;color:#ffffff;white-space:pre;letter-spacing:0.33px;-webkit-text-stroke:0.25px;">} else {</div>
<div style="position:absolute;left:13.5px;top:278.04px;font-family:'Liberation Mono', monospace;font-size:11.5px;line-height:23px;color:#ffffff;white-space:pre;letter-spacing:0.33px;-webkit-text-stroke:0.25px;">    Write-Host &quot;Einträge sind bereits vorhanden.&quot; -ForegroundColor Yellow</div>
<div style="position:absolute;left:13.5px;top:291.04px;font-family:'Liberation Mono', monospace;font-size:11.5px;line-height:23px;color:#ffffff;white-space:pre;letter-spacing:0.33px;-webkit-text-stroke:0.25px;">}</div>
<div style="position:absolute;left:13.5px;top:304.04px;font-family:'Liberation Mono', monospace;font-size:11.5px;line-height:23px;color:#50e850;white-space:pre;letter-spacing:0.33px;-webkit-text-stroke:0.25px;">Einträge wurden hinzugefügt.</div>
<div style="position:absolute;left:13.5px;top:330.04px;font-family:'Liberation Mono', monospace;font-size:11.5px;line-height:23px;color:#ffffff;white-space:pre;letter-spacing:0.33px;-webkit-text-stroke:0.25px;">PS C:\Windows\system32&gt;</div>
</div>
<div style="position:absolute;left:195px;top:788px;width:2px;height:12px;background:#a39d8a;"></div>
<div style="position:absolute;left:835px;top:452px;width:17px;height:349px;background:#efefef;border-top:1px solid #2a3450;box-shadow:inset 0 1px 0 #fff;"></div>
<div style="position:absolute;left:835px;top:494px;width:17px;height:149px;background:#c2c2c2;"></div>
<svg style="position:absolute;left:839px;top:459px;overflow:visible" width="9" height="6" viewBox="0 0 9 6"><path d="M1 5 L4.5 1.5 L8 5" stroke="#707070" stroke-width="1.1" fill="none"/></svg>
<svg style="position:absolute;left:839px;top:789px;overflow:visible" width="9" height="6" viewBox="0 0 9 6"><path d="M1 1 L4.5 4.5 L8 1" stroke="#707070" stroke-width="1.1" fill="none"/></svg>
<div style="position:absolute;left:10px;top:801px;width:842px;height:17px;background:#efefef;"></div>
<div style="position:absolute;left:27px;top:801px;width:719px;height:17px;background:#c2c2c2;"></div>
<svg style="position:absolute;left:15px;top:805px;overflow:visible" width="6" height="9" viewBox="0 0 6 9"><path d="M5 1 L1.5 4.5 L5 8" stroke="#707070" stroke-width="1.1" fill="none"/></svg>
<svg style="position:absolute;left:823px;top:805px;overflow:visible" width="6" height="9" viewBox="0 0 6 9"><path d="M1 1 L4.5 4.5 L1 8" stroke="#707070" stroke-width="1.1" fill="none"/></svg>
<div style="position:absolute;left:852px;top:81px;width:6px;height:737px;background:linear-gradient(90deg,#a0a0a0 0,#a0a0a0 1px,#dce6ee 1px,#dce6ee 3px,#a9c9f5 3px,#a9c9f5 5px,#909090 5px);"></div>
<div style="position:absolute;left:858px;top:106px;width:281px;height:712px;background:#fff;border-top:1px solid #a0a0a0;"></div>
<div style="position:absolute;left:863px;top:83px;width:75px;height:24px;background:linear-gradient(#d8f5dc,#f2fcf2);border:1px solid #8d8d8d;border-bottom:none;border-radius:6px 6px 0 0;"></div>
<div style="position:absolute;left:872.2px;top:84.72px;font-family:'Liberation Sans', sans-serif;font-size:11.5px;line-height:23px;color:#000;white-space:pre;transform:scaleX(0.8978);transform-origin:0 0;">Befehle</div>
<svg style="position:absolute;left:915px;top:92px;overflow:visible" width="10" height="10" viewBox="0 0 10 10"><path d="M1.1 1 L9.3 9.2 M9.3 1 L1.1 9.2" stroke="#333" stroke-width="2" stroke-linecap="round"/></svg>
<svg style="position:absolute;left:1125px;top:89.3px;overflow:visible" width="11" height="11" viewBox="0 0 11 11"><path d="M1.3 1 L9.8 9.5 M9.8 1 L1.3 9.5" stroke="#262626" stroke-width="1.8" stroke-linecap="round"/></svg>
<div style="position:absolute;left:872.3px;top:117.72px;font-family:'Liberation Sans', sans-serif;font-size:11.5px;line-height:23px;color:#000;white-space:pre;transform:scaleX(0.9513);transform-origin:0 0;">Module:</div>
<div style="position:absolute;left:923px;top:116px;width:133px;height:25px;background:linear-gradient(#efefef,#e2e2e2);border:1px solid #767676;"></div>
<div style="position:absolute;left:928.8px;top:115.72px;font-family:'Liberation Sans', sans-serif;font-size:11.5px;line-height:23px;color:#000;white-space:pre;transform:scaleX(1.0163);transform-origin:0 0;">Alle</div>
<svg style="position:absolute;left:1043px;top:125px;overflow:visible" width="7" height="6" viewBox="0 0 7 6"><path d="M1 1 L3.5 4 L6 1" stroke="#333" stroke-width="1.2" fill="none"/></svg>
<div style="position:absolute;left:1062px;top:116px;width:68px;height:25px;background:#d8d8d8;border:1.5px solid #333;"></div>
<div style="position:absolute;left:1064.9px;top:117.72px;font-family:'Liberation Sans', sans-serif;font-size:11.5px;line-height:23px;color:#000;white-space:pre;transform:scaleX(0.9343);transform-origin:0 0;">Aktualisieren</div>
<div style="position:absolute;left:872.3px;top:148.72px;font-family:'Liberation Sans', sans-serif;font-size:11.5px;line-height:23px;color:#000;white-space:pre;transform:scaleX(0.9008);transform-origin:0 0;">Name:</div>
<div style="position:absolute;left:923px;top:147px;width:207px;height:25px;background:#fff;border:1px solid #7a7a7a;"></div>
<div style="position:absolute;left:867px;top:184px;width:263px;height:579px;background:#fff;border:1px solid #828790;"></div>
<div style="position:absolute;left:873.8px;top:184.19px;font-family:'Liberation Sans', sans-serif;font-size:11px;line-height:22px;color:#000;white-space:pre;transform:scaleX(0.9321);transform-origin:0 0;">A:</div>
<div style="position:absolute;left:873.8px;top:202.82px;font-family:'Liberation Sans', sans-serif;font-size:11px;line-height:22px;color:#000;white-space:pre;transform:scaleX(0.981);transform-origin:0 0;">Add-AppProvisionedSharedPackageContainer</div>
<div style="position:absolute;left:873.8px;top:221.45px;font-family:'Liberation Sans', sans-serif;font-size:11px;line-height:22px;color:#000;white-space:pre;transform:scaleX(0.9798);transform-origin:0 0;">Add-AppSharedPackageContainer</div>
<div style="position:absolute;left:873.8px;top:240.08px;font-family:'Liberation Sans', sans-serif;font-size:11px;line-height:22px;color:#000;white-space:pre;transform:scaleX(1.0046);transform-origin:0 0;">Add-AppvClientConnectionGroup</div>
<div style="position:absolute;left:873.8px;top:258.71px;font-family:'Liberation Sans', sans-serif;font-size:11px;line-height:22px;color:#000;white-space:pre;transform:scaleX(0.984);transform-origin:0 0;">Add-AppvClientPackage</div>
<div style="position:absolute;left:873.8px;top:277.34px;font-family:'Liberation Sans', sans-serif;font-size:11px;line-height:22px;color:#000;white-space:pre;transform:scaleX(0.9922);transform-origin:0 0;">Add-AppvPublishingServer</div>
<div style="position:absolute;left:873.8px;top:295.97px;font-family:'Liberation Sans', sans-serif;font-size:11px;line-height:22px;color:#000;white-space:pre;transform:scaleX(0.9804);transform-origin:0 0;">Add-AppxPackage</div>
<div style="position:absolute;left:873.8px;top:314.60px;font-family:'Liberation Sans', sans-serif;font-size:11px;line-height:22px;color:#000;white-space:pre;transform:scaleX(0.9819);transform-origin:0 0;">Add-AppxProvisionedPackage</div>
<div style="position:absolute;left:873.8px;top:333.23px;font-family:'Liberation Sans', sans-serif;font-size:11px;line-height:22px;color:#000;white-space:pre;transform:scaleX(1.0159);transform-origin:0 0;">Add-AppxVolume</div>
<div style="position:absolute;left:873.8px;top:351.86px;font-family:'Liberation Sans', sans-serif;font-size:11px;line-height:22px;color:#000;white-space:pre;transform:scaleX(0.9582);transform-origin:0 0;">Add-BCDataCacheExtension</div>
<div style="position:absolute;left:873.8px;top:370.49px;font-family:'Liberation Sans', sans-serif;font-size:11px;line-height:22px;color:#000;white-space:pre;transform:scaleX(0.9906);transform-origin:0 0;">Add-BitLockerKeyProtector</div>
<div style="position:absolute;left:873.8px;top:389.12px;font-family:'Liberation Sans', sans-serif;font-size:11px;line-height:22px;color:#000;white-space:pre;transform:scaleX(0.9745);transform-origin:0 0;">Add-BitsFile</div>
<div style="position:absolute;left:873.8px;top:407.75px;font-family:'Liberation Sans', sans-serif;font-size:11px;line-height:22px;color:#000;white-space:pre;transform:scaleX(0.986);transform-origin:0 0;">Add-CertificateEnrollmentPolicyServer</div>
<div style="position:absolute;left:873.8px;top:426.38px;font-family:'Liberation Sans', sans-serif;font-size:11px;line-height:22px;color:#000;white-space:pre;transform:scaleX(1.0187);transform-origin:0 0;">Add-Computer</div>
<div style="position:absolute;left:873.8px;top:445.01px;font-family:'Liberation Sans', sans-serif;font-size:11px;line-height:22px;color:#000;white-space:pre;transform:scaleX(1.016);transform-origin:0 0;">Add-Content</div>
<div style="position:absolute;left:873.8px;top:463.64px;font-family:'Liberation Sans', sans-serif;font-size:11px;line-height:22px;color:#000;white-space:pre;transform:scaleX(0.9762);transform-origin:0 0;">Add-DnsClientDohServerAddress</div>
<div style="position:absolute;left:873.8px;top:482.27px;font-family:'Liberation Sans', sans-serif;font-size:11px;line-height:22px;color:#000;white-space:pre;transform:scaleX(0.9961);transform-origin:0 0;">Add-DnsClientNrptRule</div>
<div style="position:absolute;left:873.8px;top:500.90px;font-family:'Liberation Sans', sans-serif;font-size:11px;line-height:22px;color:#000;white-space:pre;transform:scaleX(1.0024);transform-origin:0 0;">Add-DtcClusterTMMapping</div>
<div style="position:absolute;left:873.8px;top:519.53px;font-family:'Liberation Sans', sans-serif;font-size:11px;line-height:22px;color:#000;white-space:pre;transform:scaleX(0.9693);transform-origin:0 0;">Add-EtwTraceProvider</div>
<div style="position:absolute;left:873.8px;top:538.16px;font-family:'Liberation Sans', sans-serif;font-size:11px;line-height:22px;color:#000;white-space:pre;transform:scaleX(1.0232);transform-origin:0 0;">Add-History</div>
<div style="position:absolute;left:873.8px;top:556.79px;font-family:'Liberation Sans', sans-serif;font-size:11px;line-height:22px;color:#000;white-space:pre;transform:scaleX(1.0098);transform-origin:0 0;">Add-InitiatorIdToMaskingSet</div>
<div style="position:absolute;left:873.8px;top:575.42px;font-family:'Liberation Sans', sans-serif;font-size:11px;line-height:22px;color:#000;white-space:pre;transform:scaleX(0.9929);transform-origin:0 0;">Add-JobTrigger</div>
<div style="position:absolute;left:873.8px;top:594.05px;font-family:'Liberation Sans', sans-serif;font-size:11px;line-height:22px;color:#000;white-space:pre;transform:scaleX(0.9699);transform-origin:0 0;">Add-KdsRootKey</div>
<div style="position:absolute;left:873.8px;top:612.68px;font-family:'Liberation Sans', sans-serif;font-size:11px;line-height:22px;color:#000;white-space:pre;transform:scaleX(1.0033);transform-origin:0 0;">Add-LocalGroupMember</div>
<div style="position:absolute;left:873.8px;top:631.31px;font-family:'Liberation Sans', sans-serif;font-size:11px;line-height:22px;color:#000;white-space:pre;transform:scaleX(1.0347);transform-origin:0 0;">Add-Member</div>
<div style="position:absolute;left:873.8px;top:649.94px;font-family:'Liberation Sans', sans-serif;font-size:11px;line-height:22px;color:#000;white-space:pre;transform:scaleX(0.9949);transform-origin:0 0;">Add-MpPreference</div>
<div style="position:absolute;left:873.8px;top:668.57px;font-family:'Liberation Sans', sans-serif;font-size:11px;line-height:22px;color:#000;white-space:pre;transform:scaleX(0.9949);transform-origin:0 0;">Add-MpPreference</div>
<div style="position:absolute;left:873.8px;top:687.20px;font-family:'Liberation Sans', sans-serif;font-size:11px;line-height:22px;color:#000;white-space:pre;transform:scaleX(1.0106);transform-origin:0 0;">Add-NetEventNetworkAdapter</div>
<div style="position:absolute;left:873.8px;top:705.83px;font-family:'Liberation Sans', sans-serif;font-size:11px;line-height:22px;color:#000;white-space:pre;transform:scaleX(0.9818);transform-origin:0 0;">Add-NetEventPacketCaptureProvider</div>
<div style="position:absolute;left:873.8px;top:724.46px;font-family:'Liberation Sans', sans-serif;font-size:11px;line-height:22px;color:#000;white-space:pre;transform:scaleX(0.9945);transform-origin:0 0;">Add-NetEventProvider</div>
<div style="position:absolute;left:873.8px;top:743.09px;font-family:'Liberation Sans', sans-serif;font-size:11px;line-height:22px;color:#000;white-space:pre;transform:scaleX(0.9702);transform-origin:0 0;">Add-NetEventVFPProvider</div>
<div style="position:absolute;left:1111px;top:186px;width:17px;height:575px;background:#efefef;"></div>
<div style="position:absolute;left:1111px;top:203px;width:17px;height:8px;background:#c4c4c4;"></div>
<svg style="position:absolute;left:1115px;top:191px;overflow:visible" width="9" height="6" viewBox="0 0 9 6"><path d="M1 5 L4.5 1.5 L8 5" stroke="#808080" stroke-width="1.1" fill="none"/></svg>
<svg style="position:absolute;left:1115px;top:750px;overflow:visible" width="9" height="6" viewBox="0 0 9 6"><path d="M1 1 L4.5 4.5 L8 1" stroke="#808080" stroke-width="1.1" fill="none"/></svg>
<div style="position:absolute;left:954px;top:792px;width:56px;height:21px;background:#f0f0f0;border:1px solid #8c9094;box-shadow:inset 0 0 0 1px #fff;"></div>
<div style="position:absolute;left:956.7px;top:791.72px;font-family:'Liberation Sans', sans-serif;font-size:11.5px;line-height:23px;color:#6d6d6d;white-space:pre;transform:scaleX(0.9219);transform-origin:0 0;">Ausführen</div>
<div style="position:absolute;left:1016px;top:792px;width:55px;height:21px;background:#f0f0f0;border:1px solid #8c9094;box-shadow:inset 0 0 0 1px #fff;"></div>
<div style="position:absolute;left:1021.4px;top:791.72px;font-family:'Liberation Sans', sans-serif;font-size:11.5px;line-height:23px;color:#6d6d6d;white-space:pre;transform:scaleX(0.9256);transform-origin:0 0;">Einfügen</div>
<div style="position:absolute;left:1077px;top:792px;width:56px;height:21px;background:#f0f0f0;border:1px solid #8c9094;box-shadow:inset 0 0 0 1px #fff;"></div>
<div style="position:absolute;left:1082.6px;top:791.72px;font-family:'Liberation Sans', sans-serif;font-size:11.5px;line-height:23px;color:#6d6d6d;white-space:pre;transform:scaleX(0.9258);transform-origin:0 0;">Kopieren</div>
<div style="position:absolute;left:836px;top:829px;width:1px;height:19px;background:#a8a8a8;"></div>
<div style="position:absolute;left:849.6px;top:826.24px;font-family:'Liberation Sans', sans-serif;font-size:12px;line-height:24px;color:#000;white-space:pre;transform:scaleX(0.8662);transform-origin:0 0;">Ln 31</div>
<div style="position:absolute;left:883.8px;top:826.24px;font-family:'Liberation Sans', sans-serif;font-size:12px;line-height:24px;color:#000;white-space:pre;transform:scaleX(0.9509);transform-origin:0 0;">Spalte 25</div>
<div style="position:absolute;left:943px;top:829px;width:1px;height:19px;background:#a8a8a8;"></div>
<div style="position:absolute;left:955px;top:837px;width:136px;height:2px;background:#d6d6d6;border-top:1px solid #c4c4c4;"></div>
<div style="position:absolute;left:980px;top:831px;width:9px;height:15px;background:#ececec;border:1px solid #8a8a8a;border-radius:1px;"></div>
<div style="position:absolute;left:1100.5px;top:826.24px;font-family:'Liberation Sans', sans-serif;font-size:12px;line-height:24px;color:#000;white-space:pre;transform:scaleX(0.8538);transform-origin:0 0;">100%</div>
<div style="position:absolute;left:1138px;top:841px;width:2px;height:2px;background:#9aa3bd;"></div>
<div style="position:absolute;left:1135px;top:844px;width:2px;height:2px;background:#9aa3bd;"></div>
<div style="position:absolute;left:1138px;top:844px;width:2px;height:2px;background:#9aa3bd;"></div>
<div style="position:absolute;left:1132px;top:847px;width:2px;height:2px;background:#9aa3bd;"></div>
<div style="position:absolute;left:1135px;top:847px;width:2px;height:2px;background:#9aa3bd;"></div>
<div style="position:absolute;left:1138px;top:847px;width:2px;height:2px;background:#9aa3bd;"></div>
<div style="position:absolute;left:1129px;top:850px;width:2px;height:2px;background:#9aa3bd;"></div>
<div style="position:absolute;left:1132px;top:850px;width:2px;height:2px;background:#9aa3bd;"></div>
<div style="position:absolute;left:1135px;top:850px;width:2px;height:2px;background:#9aa3bd;"></div>
<div style="position:absolute;left:1138px;top:850px;width:2px;height:2px;background:#9aa3bd;"></div>
<div style="position:absolute;left:6px;top:13px;width:1px;height:809px;background:linear-gradient(#fff,#fdfdf5);"></div>
<div style="position:absolute;left:1141px;top:12px;width:1px;height:810px;background:#fffff2;"></div>
</body></html>
